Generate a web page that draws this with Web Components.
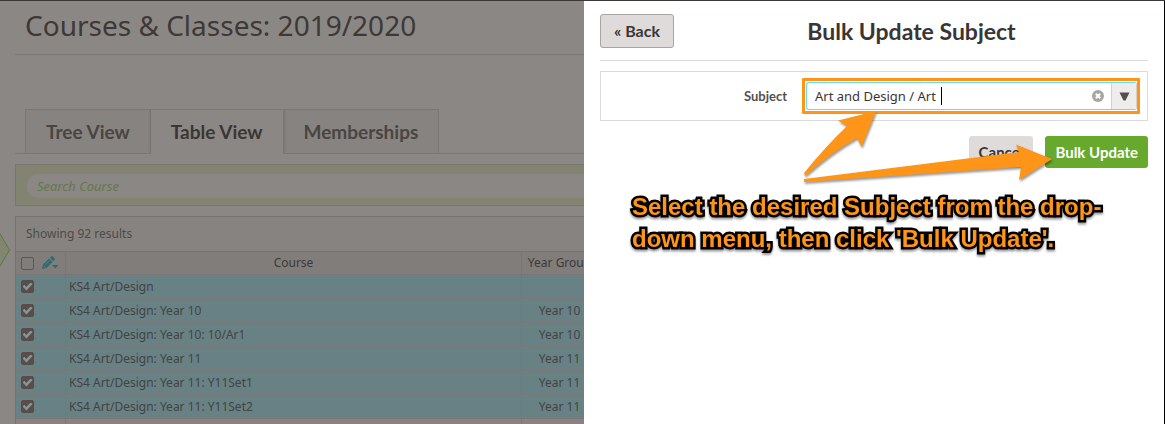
<!DOCTYPE html>
<html lang="en">
<head>
<meta charset="utf-8">
<title>Courses &amp; Classes</title>
<style>
  body { margin: 0; background: #8b8785; font-family: "Noto Sans", sans-serif; }
</style>
</head>
<body>
<app-shell>
  <courses-page heading="Courses &amp; Classes: 2019/2020">
    <view-tabs slot="tabs" items="Tree View,Table View,Memberships" active="1"></view-tabs>
    <course-search slot="search"></course-search>
    <course-table slot="table"></course-table>
  </courses-page>
  <side-panel slot="panel" heading="Bulk Update Subject">
    <subject-field value="Art and Design / Art"></subject-field>
    <action-button slot="actions">Cancel</action-button>
    <action-button slot="actions" kind="primary">Bulk Update</action-button>
    <help-note slot="note">Select the desired Subject from the drop-<br>down menu, then click 'Bulk Update'.</help-note>
  </side-panel>
</app-shell>

<script>
(function () {
  "use strict";

  function define(name, render) {
    customElements.define(
      name,
      class extends HTMLElement {
        connectedCallback() {
          if (this.shadowRoot) return;
          this.attachShadow({ mode: "open" }).innerHTML = render(this);
        }
      }
    );
  }

  define("app-shell", () => `
    <style>
      :host {
        display: grid;
        grid-template-columns: minmax(0, 584fr) minmax(0, 581fr);
        min-height: 100vh;
        max-height: 100vh;
        box-sizing: border-box;
        border-top: 1px solid #3b3535;
        overflow: hidden;
      }
    </style>
    <slot></slot>
    <slot name="panel"></slot>`);

  define("courses-page", (el) => `
    <style>
      :host { display: flex; min-width: 0; overflow: hidden; color: #3d3937; }
      .drawer { flex: none; width: 10px; height: 36px; margin: 231px 5px 0 0; }
      main { flex: 1; min-width: 0; }
      h1 {
        margin: 0;
        padding: 4px 10px 9px;
        border-bottom: 1px solid #7b7776;
        font-size: 28px;
        font-weight: 400;
        line-height: 40px;
      }
      .body { display: flex; flex-direction: column; gap: 10px; padding-top: 54px; }
    </style>
    <svg class="drawer" viewBox="0 0 10 36" aria-hidden="true">
      <path d="M-1 0 9.500 18-1 36z" fill="#828670" stroke="#5d7b37"/>
    </svg>
    <main>
      <h1>${el.getAttribute("heading").replace("&", "&amp;")}</h1>
      <div class="body">
        <slot name="tabs"></slot>
        <slot name="search"></slot>
        <slot name="table"></slot>
      </div>
    </main>`);

  define("view-tabs", (el) => {
    const active = Number(el.getAttribute("active"));
    const tabs = el.getAttribute("items").split(",").map((label, i) =>
      `<button role="tab" aria-selected="${i === active}">${label}</button>`);
    return `
    <style>
      :host { display: block; }
      div { display: flex; padding-left: 10px; border-bottom: 1px solid #7b7776; }
      button {
        margin: 0;
        padding: 0 20px;
        height: 44px;
        border: solid #7b7776;
        border-width: 1px 1px 0 0;
        background: #878381;
        color: #4a4542;
        font: 700 19px/44px Lato, sans-serif;
      }
      button:first-child { border-left-width: 1px; }
      button[aria-selected="true"] {
        margin-bottom: -1px;
        height: 45px;
        background: #8b8785;
        color: #3a3634;
        box-shadow: 0 -1px 3px #716d6c;
        clip-path: inset(0 -3px 0 -3px);
      }
    </style>
    <div role="tablist">${tabs.join("")}</div>`;
  });

  define("course-search", () => `
    <style>
      :host {
        display: flex;
        padding: 9px 0 7px 11px;
        border: 1px solid #777572;
        border-right: 0;
        background: #828471;
      }
      input {
        flex: 1;
        min-width: 0;
        box-sizing: border-box;
        height: 24px;
        padding: 0 10px;
        border: 0;
        border-radius: 12px 0 0 12px;
        background: #8b8785;
        font: italic 13px "Noto Sans", sans-serif;
      }
      input::placeholder { color: #65774c; opacity: 1; }
    </style>
    <input type="search" aria-label="Search Course" placeholder="Search Course">`);

  define("tick-box", (el) => `
    <style>
      :host { display: block; height: 13px; }
      input {
        appearance: none;
        display: grid;
        place-items: center;
        box-sizing: border-box;
        width: 13px;
        height: 13px;
        margin: 0;
        border: 1px solid #5d5553;
        border-radius: 2px;
      }
      input:checked { background: #594c49; border-color: #594c49; }
      input:checked::before {
        content: "";
        width: 10px;
        height: 8px;
        background: #7d999c;
        clip-path: polygon(0 50%, 18% 28%, 38% 55%, 82% 0, 100% 20%, 40% 100%);
      }
    </style>
    <input type="checkbox" aria-label="${el.getAttribute("label")}" ${el.hasAttribute("checked") ? "checked" : ""}>`);

  const COURSES = [
    ["KS4 Art/Design", ""],
    ["KS4 Art/Design: Year 10", "Year 10"],
    ["KS4 Art/Design: Year 10: 10/Ar1", "Year 10"],
    ["KS4 Art/Design: Year 11", "Year 11"],
    ["KS4 Art/Design: Year 11: Y11Set1", "Year 11"],
    ["KS4 Art/Design: Year 11: Y11Set2", "Year 11"],
  ];

  define("course-table", () => `
    <style>
      :host { display: block; border: solid #777371; border-width: 1px 0 0 1px; background: #878381; }
      p { margin: 0; padding: 0 10px; font-size: 12px; line-height: 34px; color: #4f4a48; }
      /* the last column runs on behind the panel */
      table {
        width: calc(100% + 14px);
        border-collapse: separate;
        border-spacing: 0;
        table-layout: fixed;
        font-size: 12px;
        line-height: 16px;
        border-top: 1px solid #777371;
      }
      .pick { width: 50px; }
      .year { width: 76px; }
      th, td {
        box-sizing: border-box;
        height: 24px;
        padding: 0 3px;
        border: solid #7a7675;
        border-width: 0 1px 1px 0;
        white-space: nowrap;
        font-weight: 400;
      }
      th { height: 23px; background: #817d7b; color: #3d3937; }
      td { background: #688184; color: #454342; text-align: left; }
      td:last-child { text-align: center; }
      td:first-child, th:first-child { padding: 0 5px; }
      .rest td { background: #8a8281; }
      .tools { display: flex; align-items: center; gap: 8px; }
      svg { width: 17px; height: 14px; }
    </style>
    <p>Showing 92 results</p>
    <table>
      <colgroup><col class="pick"><col><col class="year"></colgroup>
      <thead>
        <tr>
          <th><div class="tools">
            <tick-box label="Select all"></tick-box>
            <svg viewBox="0 0 17 14" fill="#2f6b75" aria-hidden="true">
              <path d="M0 13 1 8.500 7 2.500 10.500 6 4.500 12z"/>
              <path d="M7.800 1.800 9.500.200Q10 0 10.500.300L12.700 2.500Q13 3 12.700 3.500L11.300 5.200z"/>
              <path d="M10 9h6.500l-3.200 3.500z"/>
              <path d="M1.500 9.500 3.800 11.800M3.500 8.500 7.500 4.500" stroke="#817d7b" stroke-width=".6"/>
            </svg>
          </div></th>
          <th>Course</th>
          <th>Year Group</th>
        </tr>
      </thead>
      <tbody>
        ${COURSES.map(([course, year]) => `<tr>
          <td><tick-box label="${course}" checked></tick-box></td>
          <td>${course}</td>
          <td>${year}</td>
        </tr>`).join("")}
        <tr class="rest"><td><tick-box label="Next course"></tick-box></td><td></td><td></td></tr>
      </tbody>
    </table>`);

  define("action-button", (el) => `
    <style>
      :host { display: block; }
      button {
        height: 32px;
        padding: 0 10px;
        border: 0;
        border-radius: 3px;
        background: #dfdbdb;
        color: #3a3535;
        font: 700 15px/32px Lato, sans-serif;
      }
      .primary { background: #67a92c; color: #fff; }
      .back { height: 34px; padding: 0 13px; border: 1px solid #a9a3a2; font-size: 16px; }
    </style>
    <button type="button" class="${el.getAttribute("kind") || ""}"><slot></slot></button>`);

  define("side-panel", (el) => `
    <style>
      :host {
        display: block;
        position: relative;
        padding: 13px 16px 0;
        border-right: 1px solid #000;
        background: #fff;
        color: #3a3535;
      }
      header {
        display: grid;
        grid-template-columns: 75px 1fr;
        align-items: center;
        padding-bottom: 12px;
        border-bottom: 1px solid #dcdada;
      }
      h2 { margin: 0; text-align: center; font: 700 23px/34px Lato, sans-serif; }
      .content { padding: 10px 0 15px; }
      footer { display: flex; justify-content: flex-end; gap: 12px; }
    </style>
    <header>
      <action-button kind="back">« Back</action-button>
      <h2>${el.getAttribute("heading")}</h2>
    </header>
    <div class="content"><slot></slot></div>
    <footer><slot name="actions"></slot></footer>
    <slot name="note"></slot>`);

  define("subject-field", (el) => `
    <style>
      :host { display: grid; grid-template-columns: 201fr 338fr; align-items: center; padding: 6px 7px 6px 0; border: 1px solid #dcdada; }
      label { padding-right: 15px; text-align: right; font: 700 13px/18px Lato, sans-serif; color: #55504e; }
      .mark { border: 3px solid #ff9518; border-radius: 1px; padding: 1px 0 1px 1px; }
      .combo { display: flex; align-items: center; height: 26px; border: 1px solid #6ed8ee; border-right-color: #d5d1d0; border-radius: 3px; }
      input { width: 134px; box-sizing: border-box; margin: 0; padding: 0 0 0 8px; border: 0; outline: 0; background: none; font: 13px/20px "Noto Sans", sans-serif; color: #3a3535; }
      .caret { width: 1px; height: 18px; background: #000; }
      button { display: grid; place-items: center; padding: 0; border: 0; background: none; }
      .clear { width: 12px; height: 12px; margin: 0 7px 0 auto; }
      .open { align-self: stretch; width: 25px; border-left: 1px solid #d5d1d0; background: #efedec; }
    </style>
    <label for="subject">Subject</label>
    <div class="mark"><div class="combo">
      <input id="subject" type="text" role="combobox" aria-expanded="false" value="${el.getAttribute("value")}">
      <span class="caret"></span>
      <button type="button" class="clear" aria-label="Clear">
        <svg width="12" height="12" viewBox="0 0 12 12"><circle cx="6" cy="6" r="6" fill="#aaa5a3"/><path d="m3.800 3.800 4.400 4.400m0-4.400-4.400 4.400" stroke="#fff" stroke-width="2"/></svg>
      </button>
      <button type="button" class="open" aria-label="Show subjects">
        <svg width="11" height="9" viewBox="0 0 11 9"><path d="M.500.500h10l-4 8h-2z" fill="#554e4b"/></svg>
      </button>
    </div></div>`);

  /* annotation laid over the panel: the text and its two arrows */
  define("help-note", () => `
    <style>
      :host { display: block; padding: 23px 0 0 32px; white-space: nowrap; }
      p {
        margin: 0;
        color: #ff9518;
        font: 700 24px/32px "Liberation Sans", Arial, sans-serif;
        -webkit-text-stroke: 5px #000;
        paint-order: stroke fill;
        stroke-linejoin: round;
        filter: drop-shadow(0 2px 1px rgba(0, 0, 0, .4));
      }
      svg {
        position: absolute;
        top: 104px;
        right: 108px;
        width: 256px;
        height: 84px;
        pointer-events: none;
        filter: drop-shadow(1px 2px 1px rgba(0, 0, 0, .4));
      }
    </style>
    <svg viewBox="800 105 256 84" fill="#ff9518" aria-hidden="true">
      <path d="M804 173Q825 147 847 126L838 120.500 876 111 861.500 147 857 138Q832 152 805 176z"/>
      <path d="M804 179 1019 152 1016 144.500 1052 159 1019 180 1021 167 804 182z"/>
    </svg>
    <p><slot></slot></p>`);
})();
</script>
</body>
</html>
